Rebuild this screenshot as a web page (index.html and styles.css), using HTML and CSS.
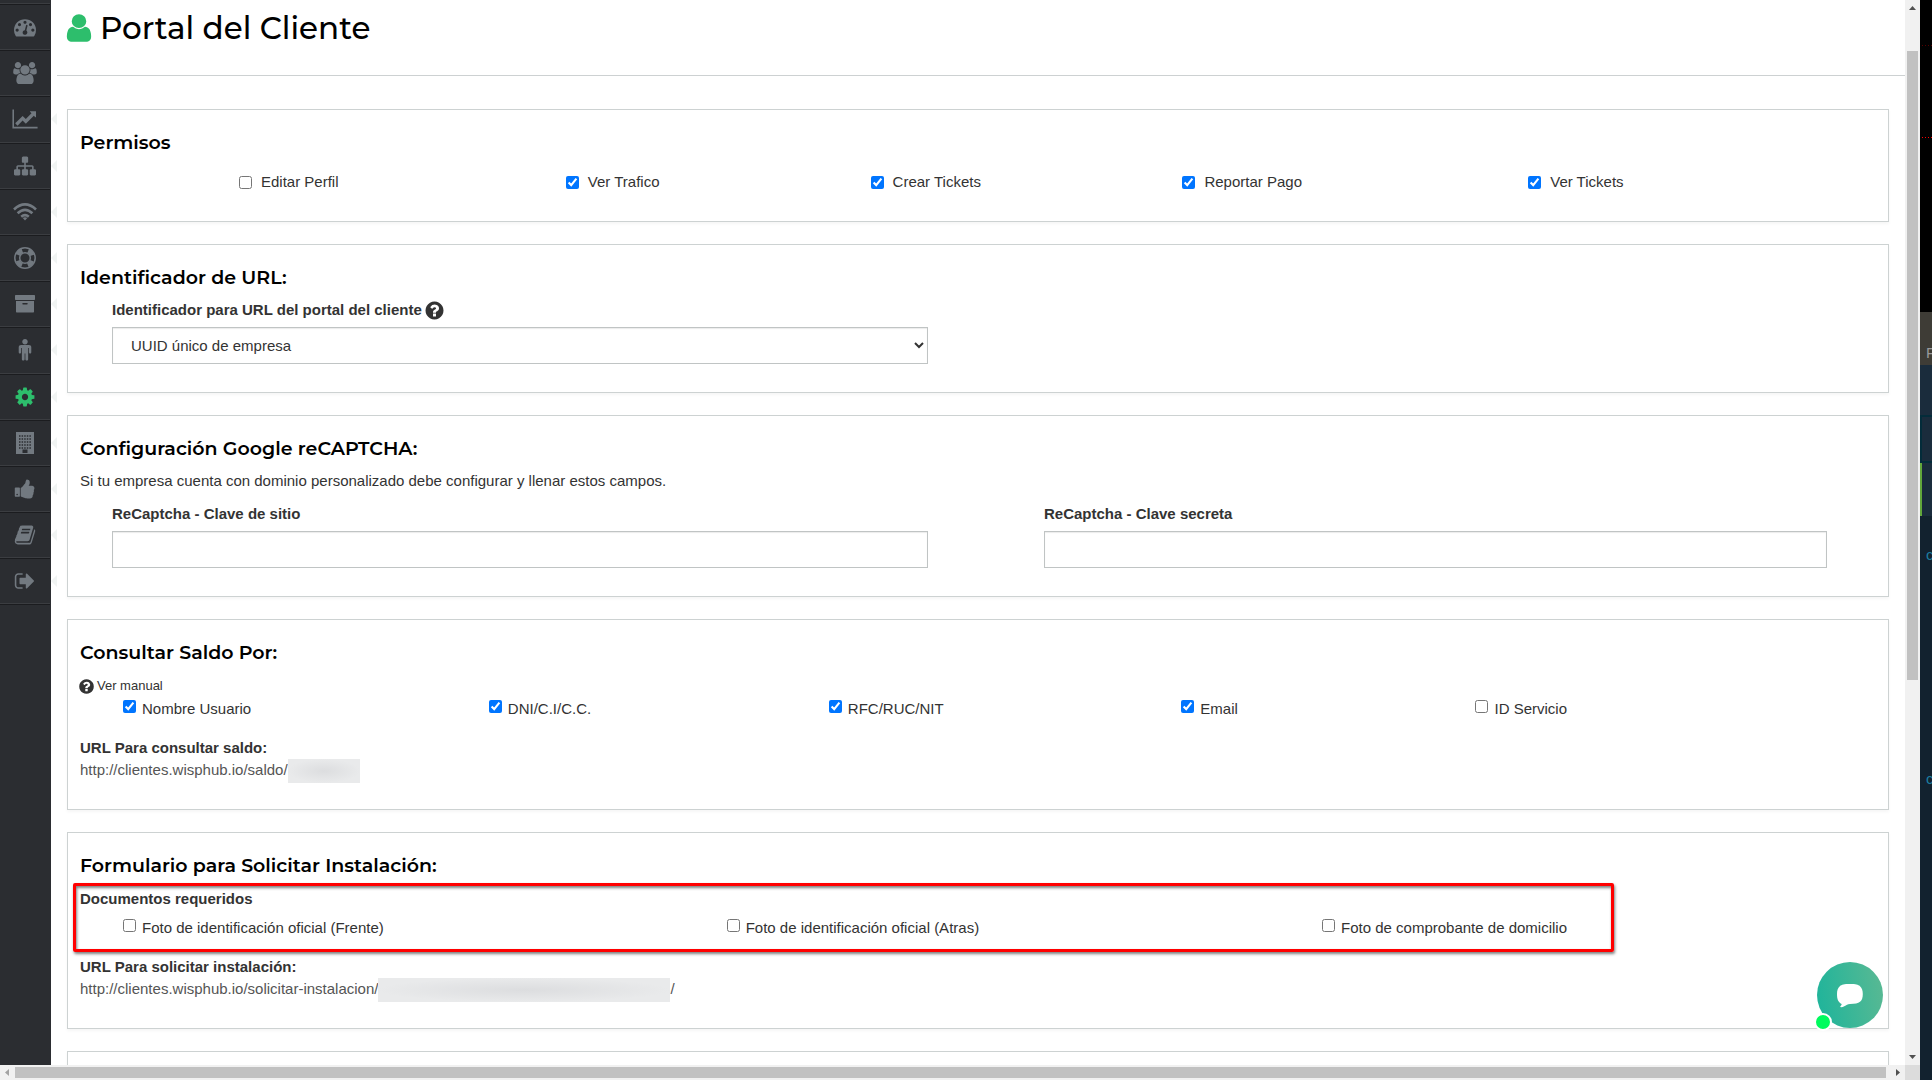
FILE: index.html
```html
<!DOCTYPE html>
<html lang="es">
<head>
<meta charset="utf-8">
<meta name="viewport" content="width=device-width, initial-scale=1">
<title>Portal del Cliente</title>
<link rel="stylesheet" href="styles.css">
</head>
<body>
<div class="desktop">
  <div class="window">
    <div class="viewport">
      <nav class="sidebar" aria-label="Menú">
        <a class="nav-item" href="#" aria-label="Dashboard"><svg width="22" height="22" viewBox="0 0 1792 1792"><path d="M384 1152q0-53-37.500-90.500t-90.500-37.500-90.500 37.500-37.500 90.500 37.500 90.500 90.500 37.500 90.500-37.500 37.500-90.500zm192-448q0-53-37.500-90.500t-90.500-37.500-90.500 37.500-37.500 90.500 37.500 90.500 90.500 37.500 90.500-37.500 37.500-90.500zm428 481l101-382q6-26-7.500-48.500t-38.500-29.500-48 6.500-30 39.500l-101 382q-60 5-107 43.500t-63 98.500q-20 77 20 146t117 89 146-20 89-117q16-60-6-117t-72-91zm660-33q0-53-37.500-90.500t-90.500-37.500-90.500 37.500-37.500 90.500 37.500 90.500 90.500 37.500 90.500-37.500 37.500-90.500zm-640-640q0-53-37.500-90.500t-90.500-37.500-90.500 37.500-37.500 90.500 37.500 90.500 90.500 37.500 90.500-37.500 37.500-90.500zm448 192q0-53-37.500-90.500t-90.500-37.500-90.500 37.500-37.500 90.500 37.500 90.500 90.500 37.500 90.500-37.500 37.500-90.500zm320 448q0 261-141 483-19 29-54 29h-1402q-35 0-54-29-141-221-141-483 0-182 71-348t191-286 286-191 348-71 348 71 286 191 191 286 71 348z"/></svg></a>
        <a class="nav-item" href="#" aria-label="Clientes"><svg width="24" height="22" viewBox="-64 0 1920 1792"><path d="M529 896q-162 5-265 128h-134q-82 0-138-40.500t-56-118.500q0-353 124-353 6 0 43.500 21t97.500 42.500 119 21.500q67 0 133-23-5 37-5 66 0 139 81 256zm1071 637q0 120-73 189.500t-194 69.500h-874q-121 0-194-69.500t-73-189.500q0-53 3.500-103.500t14-109 26.500-108.500 43-97.500 62-81 85.500-53.500 111.500-20q10 0 43 21.500t73 48 107 48 135 21.500 135-21.500 107-48 73-48 43-21.500q61 0 111.500 20t85.500 53.500 62 81 43 97.500 26.500 108.500 14 109 3.500 103.500zm-1024-1277q0 106-75 181t-181 75-181-75-75-181 75-181 181-75 181 75 75 181zm704 384q0 159-112.500 271.500t-271.500 112.500-271.500-112.500-112.500-271.500 112.500-271.500 271.500-112.500 271.500 112.500 112.500 271.500zm576 225q0 78-56 118.500t-138 40.500h-134q-103-123-265-128 81-117 81-256 0-29-5-66 66 23 133 23 59 0 119-21.500t97.500-42.500 43.500-21q124 0 124 353zm-128-609q0 106-75 181t-181 75-181-75-75-181 75-181 181-75 181 75 75 181z"/></svg></a>
        <a class="nav-item has-menu" href="#" aria-label="Finanzas"><svg width="26" height="22" viewBox="-128 0 2048 1792"><path d="M1920 1536v128h-2048v-1536h128v1408h1920zm-128-1248v435q0 21-19.500 29.500t-35.500-7.500l-121-121-633 633q-10 10-23 10t-23-10l-233-233-416 416-192-192 585-585q10-10 23-10t23 10l233 233 464-464-121-121q-16-16-7.500-35.500t29.500-19.500h435q14 0 23 9t9 23z"/></svg></a>
        <a class="nav-item has-menu" href="#" aria-label="Red"><svg width="22" height="22" viewBox="0 0 1792 1792"><path d="M1792 1248v320q0 40-28 68t-68 28h-320q-40 0-68-28t-28-68v-320q0-40 28-68t68-28h96v-192h-512v192h96q40 0 68 28t28 68v320q0 40-28 68t-68 28h-320q-40 0-68-28t-28-68v-320q0-40 28-68t68-28h96v-192h-512v192h96q40 0 68 28t28 68v320q0 40-28 68t-68 28h-320q-40 0-68-28t-28-68v-320q0-40 28-68t68-28h96v-192q0-52 38-90t90-38h512v-192h-96q-40 0-68-28t-28-68v-320q0-40 28-68t68-28h320q40 0 68 28t28 68v320q0 40-28 68t-68 28h-96v192h512q52 0 90 38t38 90v192h96q40 0 68 28t28 68z"/></svg></a>
        <a class="nav-item has-menu" href="#" aria-label="Wifi"><svg width="24" height="22" viewBox="0 0 24 22"><g fill="none" stroke="currentColor" stroke-width="2.600"><path d="M1 8.500Q12-1.600 23 8.500"/><path d="M4.600 12.300Q12 5.400 19.400 12.300"/><path d="M8.200 15.700Q12 12.400 15.800 15.700"/></g><path d="M12 16.200q1.400 0 2.300.8L12 19.600 9.700 17q.9-.8 2.300-.8z"/></svg></a>
        <a class="nav-item has-menu" href="#" aria-label="Soporte"><svg width="22" height="22" viewBox="0 0 22 22"><g fill="none" stroke="currentColor"><circle cx="11" cy="11" r="10.200" stroke-width="1.500"/><circle cx="11" cy="11" r="5.300" stroke-width="1.500"/><circle cx="11" cy="11" r="7.800" stroke-width="4.500" stroke-dasharray="6.250 6.002" stroke-dashoffset="-3"/></g></svg></a>
        <a class="nav-item has-menu" href="#" aria-label="Almacén"><svg width="22" height="22" viewBox="0 0 22 22"><path d="M1.700 2h18.600q.7 0 .7.700v3.600q0 .7-.7.700H1.700Q1 7 1 6.300V2.700Q1 2 1.700 2zM2 8h18v10.800q0 .7-.7.700H2.700q-.7 0-.7-.7zm7 2q-.7 0-.7.700t.7.800h4q.7 0 .7-.8T13 10z"/></svg></a>
        <a class="nav-item has-menu" href="#" aria-label="Personal"><svg width="22" height="22" viewBox="0 -64 1792 1792"><path d="M1408 608v416q0 40-28 68t-68 28-68-28-28-68v-352h-64v912q0 46-33 79t-79 33-79-33-33-79v-464h-64v464q0 46-33 79t-79 33-79-33-33-79v-912h-64v352q0 40-28 68t-68 28-68-28-28-68v-416q0-80 56-136t136-56h640q80 0 136 56t56 136zm-288-448q0 93-65.500 158.500t-158.500 65.500-158.500-65.500-65.500-158.500 65.500-158.500 158.500-65.500 158.500 65.500 65.500 158.500z"/></svg></a>
        <a class="nav-item has-menu active" href="#" aria-label="Ajustes"><svg width="22" height="22" viewBox="0 0 1792 1792"><path d="M1152 896q0-106-75-181t-181-75-181 75-75 181 75 181 181 75 181-75 75-181zm512-109v222q0 12-8 23t-20 13l-185 28q-19 54-39 91 35 50 107 138 10 12 10 25t-9 23q-27 37-99 108t-94 71q-12 0-26-9l-138-108q-44 23-91 38-16 136-29 186-7 28-36 28h-222q-14 0-24.500-8.500t-11.500-21.500l-28-184q-49-16-90-37l-141 107q-10 9-25 9-14 0-25-11-126-114-165-168-7-10-7-23 0-12 8-23 15-21 51-66.500t54-70.500q-27-50-41-99l-183-27q-13-2-21-12.500t-8-23.500v-222q0-12 8-23t19-13l186-28q14-46 39-92-40-57-107-138-10-12-10-24 0-10 9-23 26-36 98.500-107.500t94.500-71.500q13 0 26 10l138 107q44-23 91-38 16-136 29-186 7-28 36-28h222q14 0 24.500 8.500t11.500 21.500l28 184q49 16 90 37l142-107q9-9 24-9 13 0 25 10 129 119 165 170 7 8 7 22 0 12-8 23-15 21-51 66.500t-54 70.500q26 50 41 98l183 28q13 2 21 12.500t8 23.500z"/></svg></a>
        <a class="nav-item has-menu" href="#" aria-label="Empresa"><svg width="22" height="22" viewBox="0 0 22 22"><path fill-rule="evenodd" d="M2 0h18v22H2zM8.500 17.500V21h5v-3.500z"/><g stroke="#2b2d31" stroke-width="1.500" stroke-dasharray="1.500 1.100"><path d="M5 4h12M5 7h12M5 10h12M5 13h12M5 16h12"/></g></svg></a>
        <a class="nav-item has-menu" href="#" aria-label="Recomendar"><svg width="22" height="22" viewBox="0 0 1792 1792"><path d="M320 1344q0-26-19-45t-45-19q-27 0-45.500 19t-18.500 45q0 27 18.500 45.500t45.500 18.500q26 0 45-18.500t19-45.500zm160-512v640q0 26-19 45t-45 19h-288q-26 0-45-19t-19-45v-640q0-26 19-45t45-19h288q26 0 45 19t19 45zm1184 0q0 86-55 149 15 44 15 76 3 76-43 137 17 56 0 117-15 57-54 94 9 112-49 181-64 76-197 78h-129q-66 0-144-15.500t-121.500-29-120.500-39.500q-123-43-158-44-26-1-45-19.500t-19-44.500v-641q0-25 18-43.500t43-20.500q24-2 76-59t101-121q68-87 101-120 18-18 31-48t17.500-48.500 13.500-60.500q7-39 12.500-61t19.500-52 34-50q19-19 45-19 46 0 82.500 10.500t60 26 40 40.500 24 45 12 50 5 45 .5 39q0 38-9.500 76t-19 60-27.500 56q-3 6-10 18t-11 22-8 24h277q78 0 135 57t57 135z"/></svg></a>
        <a class="nav-item has-menu" href="#" aria-label="Manual"><svg width="22" height="22" viewBox="0 0 1792 1792"><path d="M1703 478q40 57 18 129l-275 906q-19 64-76.500 107.500t-122.500 43.500h-923q-77 0-148.500-53.500t-99.500-131.500q-24-67-2-127 0-4 3-27t4-37q1-8-3-21.500t-3-19.500q2-11 8-21t16.500-23.500 16.500-23.500q23-38 45-91.500t30-91.500q3-10 .5-30t-.5-28q3-11 17-28t17-23q21-36 42-92t25-90q1-9-2.500-32t.5-28q4-13 22-30.500t22-22.500q19-26 42.500-84.500t27.500-96.500q1-8-3-25.500t-2-26.500q2-8 9-18t18-23 17-21q8-12 16.500-30.500t15-35 16-36 19.500-32 26.500-23.500 36-11.500 47.500 5.500l-1 3q38-9 51-9h761q74 0 114 56t18 130l-274 906q-36 119-71.500 153.500t-128.500 34.500h-869q-27 0-38 15-11 16-1 43 24 70 144 70h923q29 0 56-15.500t35-41.500l300-987q7-22 5-57 38 15 59 43zm-1064 2q-4 13 2 22.500t20 9.500h608q13 0 25.500-9.500t16.500-22.500l21-64q4-13-2-22.500t-20-9.500h-608q-13 0-25.500 9.500t-16.500 22.500zm-83 256q-4 13 2 22.500t20 9.500h608q13 0 25.500-9.500t16.500-22.500l21-64q4-13-2-22.500t-20-9.500h-608q-13 0-25.500 9.500t-16.500 22.500z"/></svg></a>
        <a class="nav-item has-menu" href="#" aria-label="Salir"><svg width="22" height="22" viewBox="0 0 1792 1792"><path d="M704 1440q0 4 1 20t.5 26.500-3 23.500-10 19.500-20.500 6.500h-320q-119 0-203.500-84.500t-84.500-203.500v-704q0-119 84.500-203.500t203.500-84.500h320q13 0 22.500 9.500t9.500 22.500q0 4 1 20t.5 26.500-3 23.500-10 19.500-20.500 6.500h-320q-66 0-113 47t-47 113v704q0 66 47 113t113 47h312l11.500 1 11.500 3 8 5.500 7 9 2 13.500zm928-544q0 26-19 45l-544 544q-19 19-45 19t-45-19-19-45v-288h-448q-26 0-45-19t-19-45v-384q0-26 19-45t45-19h448v-288q0-26 19-45t45-19 45 19l544 544q19 19 19 45z"/></svg></a>
      </nav>

      <main class="content">
        <header class="page-header">
          <svg class="title-icon" width="34" height="32" viewBox="0 0 1792 1792" preserveAspectRatio="none"><path d="M1536 1399q0 109-62.500 187t-150.500 78h-854q-88 0-150.500-78t-62.500-187q0-85 8.500-160.500t31.500-152 58.500-131 94-89 134.500-34.500q131 128 313 128t313-128q76 0 134.500 34.500t94 89 58.500 131 31.500 152 8.500 160.500zm-256-887q0 159-112.500 271.500t-271.500 112.500-271.500-112.500-112.500-271.500 112.500-271.500 271.500-112.500 271.500 112.500 112.500 271.500z"/></svg>
          <h1>Portal del Cliente</h1>
        </header>

        <form class="panels">
          <section class="panel">
            <h2>Permisos</h2>
            <div class="permissions">
              <label><input type="checkbox">Editar Perfil</label>
              <label><input type="checkbox" checked>Ver Trafico</label>
              <label><input type="checkbox" checked>Crear Tickets</label>
              <label><input type="checkbox" checked>Reportar Pago</label>
              <label><input type="checkbox" checked>Ver Tickets</label>
            </div>
          </section>

          <section class="panel">
            <h2>Identificador de URL:</h2>
            <div class="fields">
              <div class="field">
                <label for="url-id">Identificador para URL del portal del cliente <svg class="help" width="21" height="21" viewBox="0 0 1792 1792"><use href="#help-shape"/></svg></label>
                <select id="url-id"><option>UUID único de empresa</option></select>
              </div>
            </div>
          </section>

          <section class="panel">
            <h2>Configuración Google reCAPTCHA:</h2>
            <p class="hint">Si tu empresa cuenta con dominio personalizado debe configurar y llenar estos campos.</p>
            <div class="fields">
              <div class="field">
                <label for="site-key">ReCaptcha - Clave de sitio</label>
                <input type="text" id="site-key">
              </div>
              <div class="field">
                <label for="secret-key">ReCaptcha - Clave secreta</label>
                <input type="text" id="secret-key">
              </div>
            </div>
          </section>

          <section class="panel">
            <h2>Consultar Saldo Por:</h2>
            <a class="manual" href="#"><svg class="help" width="17" height="17" viewBox="0 0 1792 1792"><path id="help-shape" d="M1024 1376v-192q0-14-9-23t-23-9h-192q-14 0-23 9t-9 23v192q0 14 9 23t23 9h192q14 0 23-9t9-23zm256-672q0-88-55.500-163t-138.500-116-170-41q-243 0-371 213-15 24 8 42l132 100q7 6 19 6 16 0 25-12 53-68 86-92 34-24 86-24 48 0 85.500 26t37.500 59q0 38-20 61t-68 45q-63 28-115.500 86.500t-52.500 125.500v36q0 14 9 23t23 9h192q14 0 23-9t9-23q0-19 21.500-49.500t54.500-49.500q32-18 49-28.500t46-35 44.500-48 28-60.500 12.500-81zm384 192q0 209-103 385.500t-279.500 279.500-385.500 103-385.500-103-279.500-279.500-103-385.500 103-385.500 279.500-279.500 385.500-103 385.500 103 279.500 279.500 103 385.500z"/></svg>Ver manual</a>
            <div class="options">
              <label><input type="checkbox" checked>Nombre Usuario</label>
              <label><input type="checkbox" checked>DNI/C.I/C.C.</label>
              <label><input type="checkbox" checked>RFC/RUC/NIT</label>
              <label><input type="checkbox" checked>Email</label>
              <label><input type="checkbox">ID Servicio</label>
            </div>
            <div class="url-block">
              <strong>URL Para consultar saldo:</strong>
              <div class="url-line"><a href="#">http://clientes.wisphub.io/saldo/</a><span class="redacted short"></span></div>
            </div>
          </section>

          <section class="panel">
            <h2>Formulario para Solicitar Instalación:</h2>
            <div class="documents">
              <strong>Documentos requeridos</strong>
              <div class="options">
                <label><input type="checkbox">Foto de identificación oficial (Frente)</label>
                <label><input type="checkbox">Foto de identificación oficial (Atras)</label>
                <label><input type="checkbox">Foto de comprobante de domicilio</label>
              </div>
              <div class="highlight"></div>
            </div>
            <div class="url-block">
              <strong>URL Para solicitar instalación:</strong>
              <div class="url-line"><a href="#">http://clientes.wisphub.io/solicitar-instalacion/</a><span class="redacted long"></span><a href="#">/</a></div>
            </div>
          </section>

          <section class="panel"></section>
        </form>
      </main>

      <button class="chat" type="button" aria-label="Chat"><svg width="28" height="25" viewBox="0 0 28 25"><path d="M14 1C20 1 22 1.500 24 3.200c2 1.600 2.800 4.300 2.800 7.800 0 3.600-.8 6.200-2.800 7.800-2 1.600-5 2.200-10 2.200-1.300 0-2.200.2-3 .8-1.500 1.100-4 2.500-6 2.400-.8-.1-.9-.8-.4-1.200.7-.6 1.100-1.200 1-2C2 19 1 16 1 11c0-3.500.8-6.200 2.800-7.800C5.800 1.500 8 1 14 1z"/></svg><span class="online"></span></button>
    </div>

    <div class="scroll scroll-y">
      <svg width="15" height="15" viewBox="0 0 15 15"><path fill="#505050" d="M4 10h7L7.500 6z"/></svg>
      <div class="track"><div class="thumb"></div></div>
      <svg width="15" height="15" viewBox="0 0 15 15"><path fill="#505050" d="M4 5h7L7.500 9z"/></svg>
    </div>
    <div class="scroll scroll-x">
      <svg width="15" height="15" viewBox="0 0 15 15"><path fill="#a3a3a3" d="M9 4v7L5 7.500z"/></svg>
      <div class="track"><div class="thumb"></div></div>
      <svg width="15" height="15" viewBox="0 0 15 15"><path fill="#505050" d="M6 4v7l4-3.500z"/></svg>
    </div>
    <div class="corner"></div>
  </div>

  <aside class="behind" aria-hidden="true">
    <div class="strip plot"></div>
    <div class="strip tab">F</div>
    <div class="strip row-a"></div>
    <div class="strip row-b"></div>
    <div class="strip row-c"></div>
    <div class="strip code"><span>c</span><span>c</span></div>
  </aside>
</div>
</body>
</html>
```

FILE: styles.css
```css
* { box-sizing: border-box; }

body {
  margin: 0;
  background: #fff;
  color: #333;
  font: 15px/22px "Liberation Sans", Arial, sans-serif;
}

svg { display: block; flex: none; fill: currentColor; }
a { color: inherit; text-decoration: none; }

.desktop {
  display: flex;
  height: 100vh;
  overflow: hidden;
}

.window {
  flex: 1;
  min-width: 0;
  display: grid;
  grid-template: minmax(0, 1fr) 15px / minmax(0, 1fr) 15px;
}

.viewport {
  position: relative;
  display: flex;
  overflow: hidden;
}

/* Sidebar */
.sidebar {
  flex: none;
  width: 51px;
  padding-top: 3px;
  background: #2b2d31;
  border-right: 1px solid #2b2d31;
}

.nav-item {
  position: relative;
  display: flex;
  align-items: center;
  justify-content: center;
  height: 46px;
  border-top: 1px solid #3b3d41;
  box-shadow: inset 0 1px #1b1c1f;
  color: #727980;
}
.nav-item:nth-child(5n + 3) { height: 47px; }
.nav-item:last-child {
  border-bottom: 1px solid #3b3d41;
  box-shadow: inset 0 1px #1b1c1f, 0 1px #1b1c1f;
}
.nav-item.active { color: #2dbe6c; }

.has-menu::after {
  content: "";
  position: absolute;
  left: 51px;
  border: 6px solid transparent;
  border-left: 0;
  border-right-color: #f1f4f3;
}

/* Page */
.content {
  flex: 1;
  min-width: 0;
  padding-left: 6px;
}

.page-header {
  display: flex;
  align-items: center;
  height: 76px;
  padding: 0 0 20px 5px;
  border-bottom: 1px solid #cdd1d2;
}
.page-header h1 {
  margin: 0 0 0 4px;
  color: #000;
  font: 500 31px/36px Montserrat, Inter, sans-serif;
}
.title-icon { color: #2dbe6c; }

.panels {
  display: flex;
  flex-direction: column;
  gap: 22px;
  padding: 33px 16px 0 10px;
}

.panel {
  padding: 22px 12px 28px;
  border: 1px solid #cdd2d2;
  box-shadow: 0 2px 3px rgba(0, 0, 0, .04);
}
.panel h2 {
  margin: 0 0 10px;
  color: #000;
  font: 600 19px/22px Montserrat, Inter, sans-serif;
}

input[type="checkbox"] {
  width: 13px;
  height: 13px;
  margin: 0;
  accent-color: #0075ff;
}

.permissions {
  display: grid;
  grid-template-columns: 327fr 305fr 312fr 346fr 348fr;
  margin-top: 17px;
  padding-left: 159px;
}
.permissions label {
  display: flex;
  align-items: center;
  gap: 9px;
}

.fields {
  display: grid;
  grid-template-columns: 816fr 783fr;
  gap: 116px;
  padding: 0 49px 0 32px;
}
.field {
  display: flex;
  flex-direction: column;
  gap: 6px;
}
.field label {
  display: flex;
  align-items: center;
  gap: 2px;
  height: 22px;
  font-weight: 700;
}
.field input,
.field select {
  width: 100%;
  height: 37px;
  padding: 0 14px;
  border: 1px solid #c0c4c4;
  border-radius: 0;
  background: #fff;
  box-shadow: inset 0 1px 1px rgba(0, 0, 0, .08);
  color: #333;
  font: inherit;
}
.field select { padding-right: 0; }

.hint { margin: 0 0 11px; }

.manual {
  display: flex;
  align-items: center;
  gap: 2px;
  margin-left: -2px;
  height: 24px;
  font-size: 13px;
}
.help { color: #333; }

.options {
  display: flex;
  justify-content: space-between;
  padding: 0 309px 0 43px;
}
.options label {
  display: flex;
  align-items: center;
  gap: 6px;
}
.options input[type="checkbox"] { margin-bottom: 5px; }

.url-block { margin-top: 17px; }
.url-block strong { display: block; }
.url-line {
  display: flex;
  height: 22px;
  color: #555;
}

.redacted {
  height: 24px;
  background: radial-gradient(closest-side, #dcdddf, #e9eaeb);
}
.short { width: 72px; }
.long { width: 292px; }

.documents {
  position: relative;
  display: flex;
  flex-direction: column;
  gap: 7px;
  padding-top: 1px;
}
.highlight {
  position: absolute;
  inset: -4px 262px -13px -7px;
  border: 3px solid #f00;
  border-radius: 2px;
  box-shadow: 1px 2px 3px rgba(0, 0, 0, .5), inset 1px 2px 3px rgba(0, 0, 0, .5);
  pointer-events: none;
}

/* Chat launcher */
.chat {
  position: absolute;
  right: 22px;
  bottom: 37px;
  display: grid;
  place-items: center;
  width: 66px;
  height: 66px;
  padding: 0;
  border: 0;
  border-radius: 50%;
  background: linear-gradient(80deg, #1cb49b, #5bb993);
  color: #fff;
}
.online {
  position: absolute;
  left: -3px;
  bottom: -3px;
  width: 18px;
  height: 18px;
  border: 2px solid #fff;
  border-radius: 50%;
  background: #00fb5e;
}

/* Scroll bars */
.scroll { display: flex; background: #f1f1f1; }
.scroll .track { flex: 1; display: flex; }
.scroll-y, .scroll-y .track { flex-direction: column; }
.thumb { background: #c1c1c1; }
.scroll-y .track { padding: 36px 2px 0; }
.scroll-y .thumb { height: 63%; }
.scroll-x .track { padding: 2px 4px 2px 0; }
.scroll-x .thumb { width: 100%; }
.corner { background: #dcdcdc; }

/* Edge of the windows behind */
.behind {
  display: flex;
  flex-direction: column;
  flex: none;
  width: 12px;
  overflow: hidden;
}
.plot {
  height: 312px;
  background:
    repeating-linear-gradient(90deg, #500 0 1px, transparent 1px 3px) 2px 45px / 12px 1px no-repeat,
    repeating-linear-gradient(90deg, #f00 0 1px, transparent 1px 3px) 2px 137px / 12px 1px no-repeat,
    #000;
}
.tab {
  height: 53px;
  padding: 30px 0 0 6px;
  background: #3e3c36;
  color: #999;
}
.row-a { height: 50px; background: #1a2c3c; }
.row-b { height: 48px; border: 2px solid #032c3a; border-right: 0; background: #1a2c3c; }
.row-c { height: 53px; border-left: 2px solid #62a73b; background: #1a2c3c; }
.code {
  flex: 1;
  display: flex;
  flex-direction: column;
  gap: 202px;
  padding: 28px 0 0 6px;
  background: #12222f;
  color: #1c7ea0;
}
```
